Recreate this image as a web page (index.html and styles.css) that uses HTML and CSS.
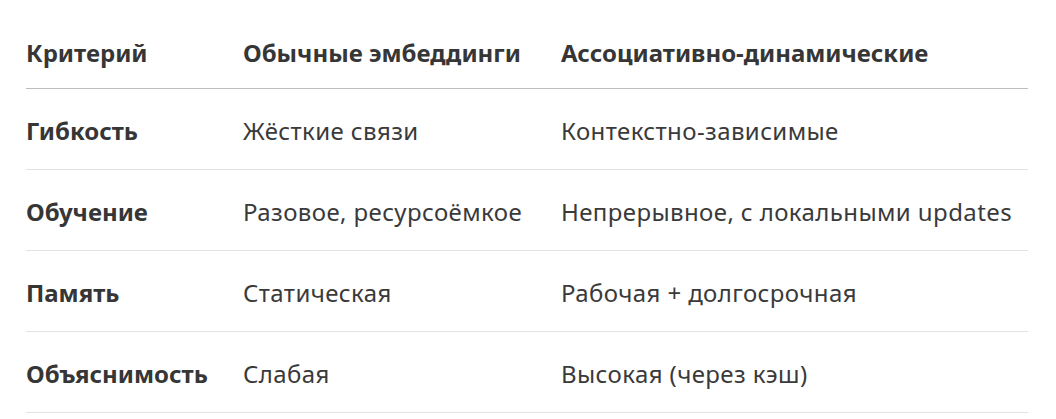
FILE: index.html
```html
<!DOCTYPE html>
<html lang="ru">
<head>
<meta charset="utf-8">
<link rel="stylesheet" href="styles.css">
</head>
<body>
<div class="wrap">
<table class="cmp">
  <colgroup><col class="c1"><col class="c2"><col class="c3"></colgroup>
  <thead>
    <tr><th>Критерий</th><th>Обычные эмбеддинги</th><th>Ассоциативно-динамические</th></tr>
  </thead>
  <tbody>
    <tr><td class="k">Гибкость</td><td>Жёсткие связи</td><td>Контекстно-зависимые</td></tr>
    <tr><td class="k">Обучение</td><td>Разовое, ресурсоёмкое</td><td>Непрерывное, с локальными updates</td></tr>
    <tr><td class="k">Память</td><td>Статическая</td><td>Рабочая + долгосрочная</td></tr>
    <tr><td class="k">Объяснимость</td><td>Слабая</td><td>Высокая (через кэш)</td></tr>
  </tbody>
</table>
</div>
</body>
</html>
```
FILE: styles.css
```css
html, body { margin: 0; padding: 0; background: #fff; }
body { font-family: "Noto Sans", "Open Sans", sans-serif; color: #3a3a3a; }
.wrap { padding: 13px 28px 0 26px; }
.cmp { width: 100%; border-collapse: collapse; table-layout: fixed; font-size: 24px; }
.c1 { width: 217px; }
.c2 { width: 318px; }
.cmp th, .cmp td { text-align: left; padding: 4px 0 0 0; vertical-align: middle; white-space: nowrap; box-sizing: border-box; overflow: visible; }
.cmp th { font-weight: 700; height: 75px; border-bottom: 1px solid #bdbdbd; color: #363636; }
.cmp td { height: 81px; border-bottom: 1px solid #e3e3e3; letter-spacing: 0.4px; }
.cmp td.k { font-weight: 700; letter-spacing: 0; color: #363636; }
```
